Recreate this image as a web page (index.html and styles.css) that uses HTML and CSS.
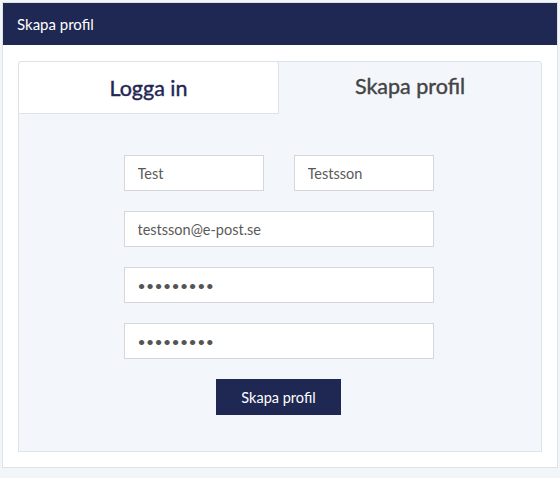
FILE: index.html
```html
<!DOCTYPE html>
<html lang="sv">
<head>
<meta charset="utf-8">
<title>Skapa profil</title>
<link rel="stylesheet" href="styles.css">
</head>
<body>
<div class="panel">
  <div class="panel-head">Skapa profil</div>
  <div class="panel-body">
    <div class="card">
      <div class="tabs">
        <div class="tab tab-login">Logga in</div>
        <div class="tab tab-create">Skapa profil</div>
      </div>
      <form class="form">
        <div class="row">
          <input class="field half" type="text" value="Test">
          <input class="field half" type="text" value="Testsson">
        </div>
        <input class="field" type="text" value="testsson@e-post.se">
        <input class="field pw" type="password" value="123456789">
        <input class="field pw" type="password" value="123456789">
        <button class="btn" type="button">Skapa profil</button>
      </form>
    </div>
  </div>
</div>
</body>
</html>
```
FILE: styles.css
```css
html, body {
  margin: 0;
  padding: 0;
  background: #f3f6f9;
  font-family: Lato, "Open Sans", sans-serif;
}
body {
  padding: 2px 2px 0 2px;
}
.panel {
  width: 554px;
  background: #ffffff;
  border: 1px solid #dde2e6;
}
.panel-head {
  height: 42px;
  background: #1f2753;
  color: #ffffff;
  font-size: 15px;
  line-height: 42px;
  padding-left: 14px;
}
.panel-body {
  padding: 16px 15px 15px 15px;
}
.card {
  width: 522px;
  background: #f3f6fa;
  border: 1px solid #dde2e6;
  border-radius: 3px 3px 0 0;
  height: 389px;
}
.tabs {
  display: flex;
  height: 53px;
  margin: -1px 0 0 -1px;
}
.tab {
  flex: 0 0 auto;
  display: flex;
  align-items: center;
  justify-content: center;
  font-size: 21.5px;
  font-weight: 400;
  -webkit-text-stroke: 0.4px currentColor;
}
.tab-login {
  width: 259px;
  background: #ffffff;
  border: 1px solid #dde2e6;
  border-radius: 3px 3px 0 0;
  color: #1f2753;
}
.tab-create {
  width: 262px;
  color: #444444;
  padding-bottom: 4px;
}
.form {
  display: flex;
  flex-direction: column;
  align-items: center;
  gap: 20px;
  padding-top: 41px;
  padding-right: 3px;
}
.row {
  display: flex;
  gap: 30px;
}
.field {
  box-sizing: border-box;
  width: 310px;
  height: 36px;
  margin: 0;
  border: 1px solid #d3d7db;
  background: #ffffff;
  padding: 0 13px;
  font-family: Lato, "Open Sans", sans-serif;
  font-size: 14.5px;
  font-weight: 400;
  color: #5a5a5a;
  outline: none;
  border-radius: 0;
}
.field.half {
  width: 140px;
}
.field.pw {
  font-size: 14px;
  letter-spacing: 0.4px;
  color: #555555;
}
.btn {
  box-sizing: border-box;
  width: 125px;
  height: 36px;
  border: none;
  margin: 0;
  background: #1f2753;
  color: #ffffff;
  font-family: Lato, "Open Sans", sans-serif;
  font-size: 14.5px;
  cursor: pointer;
}
```
